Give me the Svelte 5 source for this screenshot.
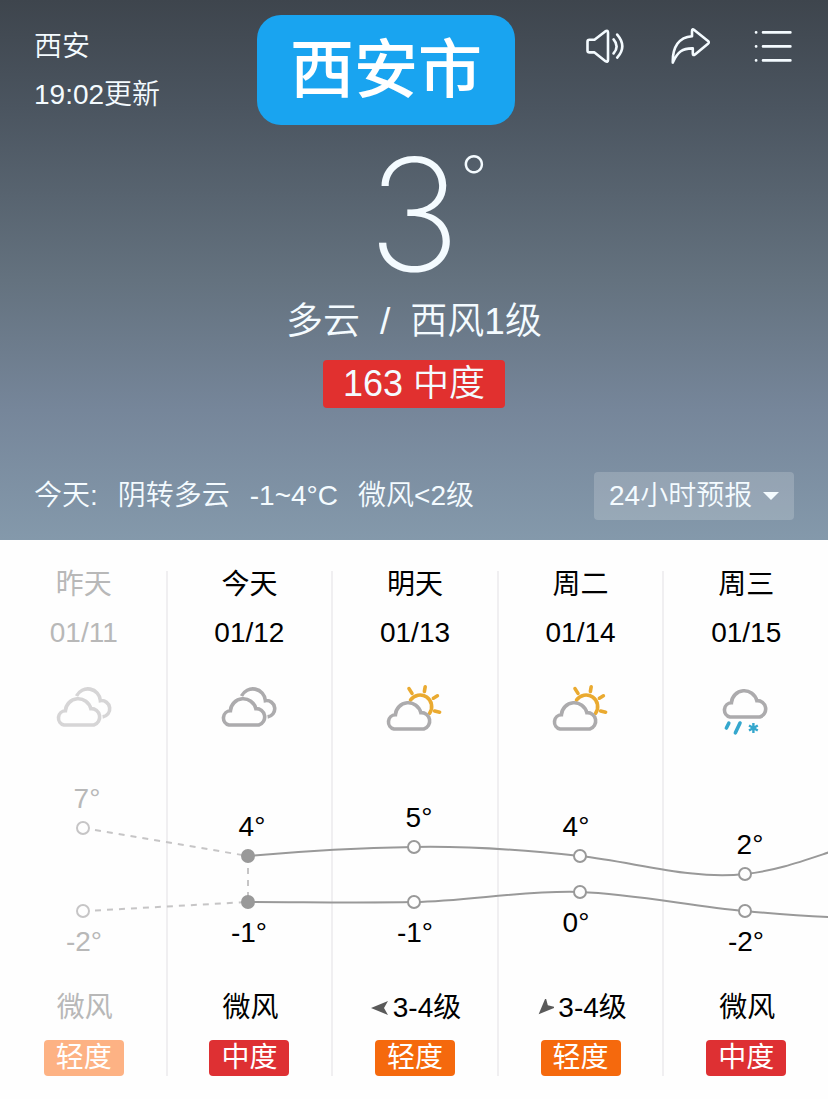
<script lang="ts">
    type Day = {
        name: string
        date: string
        icon: 'cloudy' | 'sunny' | 'sleet'
        wind: string
        arrow?: number
        air: string
        level: 'light' | 'medium'
        past?: boolean
    }

    type Point = {
        x: number
        y: number
        temp: number
        labelX: number
    }

    const days: Day[] = [
        { name: '昨天', date: '01/11', icon: 'cloudy', wind: '微风', air: '轻度', level: 'light', past: true },
        { name: '今天', date: '01/12', icon: 'cloudy', wind: '微风', air: '中度', level: 'medium' },
        { name: '明天', date: '01/13', icon: 'sunny', wind: '3-4级', arrow: 0, air: '轻度', level: 'light' },
        { name: '周二', date: '01/14', icon: 'sunny', wind: '3-4级', arrow: -45, air: '轻度', level: 'light' },
        { name: '周三', date: '01/15', icon: 'sleet', wind: '微风', air: '中度', level: 'medium' },
    ]

    // chart coordinates, 828 x 200
    const highs: Point[] = [
        { x: 83, y: 58, temp: 7, labelX: 87 },
        { x: 248, y: 86, temp: 4, labelX: 252 },
        { x: 414, y: 77, temp: 5, labelX: 419 },
        { x: 580, y: 86, temp: 4, labelX: 576 },
        { x: 745, y: 104, temp: 2, labelX: 750 },
    ]
    const lows: Point[] = [
        { x: 83, y: 141, temp: -2, labelX: 84 },
        { x: 248, y: 132, temp: -1, labelX: 249 },
        { x: 414, y: 132, temp: -1, labelX: 415 },
        { x: 580, y: 122, temp: 0, labelX: 576 },
        { x: 745, y: 141, temp: -2, labelX: 746 },
    ]

    let range = $state('24')
</script>

{#snippet points(list: Point[], offset: number)}
    {#each list as p, i}
        <circle class:past={i === 0} class:today={i === 1} cx={p.x} cy={p.y} r="6" />
        <text class:past={i === 0} x={p.labelX} y={p.y + offset}>{p.temp}°</text>
    {/each}
{/snippet}

{#snippet cloud()}
    <path d="M12 43A7.2 7.2 0 0 1 13.4 28.8A12.9 12.9 0 0 1 38.8 26.6A8.4 8.4 0 0 1 41.8 43Z" />
{/snippet}

<main>
    <header>
        <div class="top">
            <div class="place">
                <span>西安</span>
                <span>19:02更新</span>
            </div>
            <h1>西安市</h1>
            <nav>
                <button aria-label="播报">
                    <svg viewBox="0 0 40 40">
                        <path d="M3.5 13.8H8.5L19.5 5.2Q22 3.8 22 6.5V34Q22 36.8 19.5 35.2L8.5 26.4H3.5Q1.5 26.4 1.5 24.4V15.8Q1.5 13.8 3.5 13.8Z" />
                        <path d="M27.6 13.4Q33.6 20.4 27.6 27.4M31.2 8.6Q41.4 20.4 31.2 31.6" />
                    </svg>
                </button>
                <button aria-label="分享">
                    <svg viewBox="0 0 40 40">
                        <path d="M2.8 36.6C2.4 21 9 11 22 10.2V5Q22 2.2 24.2 4L38 15Q39.6 16.4 38 17.8L25 28.4Q22.8 30 22.8 27.4V22.4C12.6 22.2 7.6 25.4 2.8 36.6Z" />
                    </svg>
                </button>
                <button aria-label="菜单">
                    <svg viewBox="0 0 40 40">
                        <path d="M2 6.4H2.2M2 20.4H2.2M2 34.4H2.2M9 6.4H36.4M9 20.4H36.4M9 34.4H36.4" />
                    </svg>
                </button>
            </nav>
        </div>

        <div class="now">
            <div class="temp">3<span class="degree">°</span></div>
            <div class="condition">
                <span>多云</span>
                <span>/</span>
                <span>西风1级</span>
            </div>
            <div class="aqi">163 中度</div>
        </div>

        <div class="summary">
            <span>今天:</span>
            <span>阴转多云</span>
            <span>-1~4°C</span>
            <span>微风&lt;2级</span>
            <div class="range">
                <select aria-label="预报" bind:value={range}>
                    <option value="24">24小时预报</option>
                </select>
                <svg viewBox="0 0 16 8"><path d="M0 0H16L8 8Z" /></svg>
            </div>
        </div>
    </header>

    <section class="forecast">
        {#each days as day, i}
            <article class:past={day.past} style:grid-column={i + 1}>
                <div class="head">
                    <span>{day.name}</span>
                    <span>{day.date}</span>
                    <svg class="weather" viewBox="2 0 60 56">
                        {#if day.icon === 'cloudy'}
                            <path d="M24.5 14A12.6 12.6 0 0 1 48.4 18.6A8.2 8.2 0 0 1 50.6 34.9" />
                            {@render cloud()}
                        {:else if day.icon === 'sunny'}
                            <g class="sun">
                                <path d="M27.5 18A11.2 11.2 0 1 1 46.6 31.2" />
                                <path d="M26 6.6L29 11.4M42.2 4.8L41.4 9.4M54.4 13.8L50.4 16.2M51.6 29L56.6 30.2" />
                            </g>
                            <g transform="translate(-1 4)">{@render cloud()}</g>
                        {:else}
                            <g transform="translate(4 -8)">{@render cloud()}</g>
                            <path class="rain" d="M14.8 41.2L12.4 46M26 41L21.4 50.8" />
                            <path class="snow" d="M39.4 41V51M35 43.5L43.8 48.5M43.8 43.5L35 48.5" />
                        {/if}
                    </svg>
                </div>
                <div class="foot">
                    <div class="wind">
                        {#if day.arrow !== undefined}
                            <svg viewBox="0 0 18 18"><path transform="rotate({day.arrow} 9 9)" d="M0 9L17 2L13 9L17 16Z" /></svg>
                        {/if}
                        {day.wind}
                    </div>
                    <div class="air {day.level}">{day.air}</div>
                </div>
            </article>
        {/each}

        <svg class="chart" viewBox="0 0 828 200">
            <path class="dashed" d="M95 60L248 86M95 140.5L248 132M248 98V126" />
            <path d="M248 86C303 81 359 78 414 77S525 80 580 86S690 110 745 104C775 101 800 92 830 82" />
            <path d="M248 132C303 132 359 133 414 132S525 120 580 122S690 136 745 141C775 144 800 146 830 147" />
            {@render points(highs, -20)}
            {@render points(lows, 40)}
        </svg>
    </section>
</main>

<style>
    :global(body) {
        margin: 0;
        background: #fefefe;
    }

    main {
        font-family: "Liberation Sans", "Noto Sans CJK SC", sans-serif;
        font-size: 28px;
        line-height: 28px;
        color: #000;
    }

    header {
        padding: 15px 34px 20px;
        background: linear-gradient(#3e454d, #4b5560 20%, #64727f 52%, #76869a 76%, #8499ab);
        color: #f4fbff;
        font-weight: 350;
    }

    .top {
        display: grid;
        grid-template-columns: 223fr 258fr 279fr;
    }

    .place {
        display: flex;
        flex-direction: column;
        gap: 20px;
        padding-top: 18px;
    }

    h1 {
        margin: 0;
        padding: 23px 0;
        border-radius: 24px;
        background: #19a4f0;
        color: #fff;
        font-size: 64px;
        font-weight: 500;
        line-height: 64px;
        text-align: center;
    }

    nav {
        display: flex;
        justify-content: flex-end;
        align-items: flex-start;
        gap: 44px;
        padding-top: 11px;

        button {
            padding: 0;
            border: 0;
            background: none;
        }

        svg {
            display: block;
            width: 40px;
            height: 40px;
            fill: none;
            stroke: #f4fbff;
            stroke-width: 2.6;
            stroke-linecap: round;
            stroke-linejoin: round;
        }
    }

    .now {
        display: flex;
        flex-direction: column;
        align-items: center;
    }

    .temp {
        position: relative;
        margin-top: 10px;
        font-family: Inter, sans-serif;
        font-size: 156px;
        font-weight: 200;
        font-optical-sizing: none;
        line-height: 160px;
    }

    .degree {
        position: absolute;
        top: 12px;
        left: 100%;
        font-size: 60px;
        font-weight: 200;
        line-height: 60px;
    }

    .condition {
        display: flex;
        gap: 20px;
        margin-top: 3px;
        font-size: 37px;
        line-height: 48px;
    }

    .aqi {
        margin-top: 14px;
        padding: 0 20px;
        border-radius: 4px;
        background: #e1302f;
        font-size: 36px;
        line-height: 48px;
    }

    .summary {
        display: flex;
        align-items: center;
        gap: 20px;
        margin-top: 64px;
    }

    .range {
        position: relative;
        margin-left: auto;

        select {
            appearance: none;
            width: 200px;
            height: 48px;
            padding: 0 15px;
            border: 0;
            border-radius: 4px;
            background: rgba(255, 255, 255, 0.18);
            color: inherit;
            font: inherit;
        }

        svg {
            position: absolute;
            top: 20px;
            right: 15px;
            width: 16px;
            height: 8px;
            fill: #f4fbff;
            pointer-events: none;
        }
    }

    .forecast {
        display: grid;
        grid-template-columns: repeat(5, 1fr);
        grid-template-rows: auto auto auto;
        padding: 31px 0 22px;
    }

    article {
        display: grid;
        grid-row: 1 / 4;
        grid-template-rows: subgrid;
        border-left: 2px solid #f0eff1;

        &.past {
            border-color: transparent;
            color: #b8b8b8;
        }
    }

    .head {
        display: flex;
        flex-direction: column;
        align-items: center;
        gap: 20px;
        padding-bottom: 32px;
    }

    .weather {
        width: 60px;
        height: 56px;
        margin-top: 15px;
        fill: none;
        stroke: #acabad;
        stroke-width: 3.6;

        .past & {
            stroke: #d6d5d6;
        }

        path {
            fill: #fefefe;
        }

        .sun {
            stroke: #eaaa30;
            stroke-linecap: round;
        }

        .rain {
            stroke: #35a7cd;
            stroke-linecap: round;
        }

        .snow {
            stroke: #35a7cd;
            stroke-width: 2.4;
        }
    }

    .chart {
        grid-area: 2 / 1 / 3 / -1;
        display: block;
        width: 100%;
        fill: none;
        stroke: #999;
        stroke-width: 2;

        .dashed {
            stroke: #c6c5c6;
            stroke-dasharray: 6 6;
        }

        circle {
            fill: #fefefe;
        }

        circle.past {
            stroke: #c6c5c6;
        }

        circle.today {
            fill: #999;
        }

        text {
            fill: #000;
            stroke: none;
            text-anchor: middle;
        }

        text.past {
            fill: #b8b8b8;
        }
    }

    .foot {
        grid-row: 3;
        display: flex;
        flex-direction: column;
        align-items: center;
        gap: 18px;
        padding-top: 24px;
    }

    .wind {
        display: flex;
        align-items: center;
        gap: 4px;
        padding-left: 2px;

        svg {
            width: 18px;
            height: 18px;
            fill: #5a5a5a;
        }
    }

    .air {
        width: 80px;
        border-radius: 4px;
        color: #fff;
        line-height: 36px;
        text-align: center;

        &.light {
            background: #f5690d;
        }

        &.medium {
            background: #de3033;
        }

        .past &.light {
            background: #fdb284;
        }
    }
</style>
